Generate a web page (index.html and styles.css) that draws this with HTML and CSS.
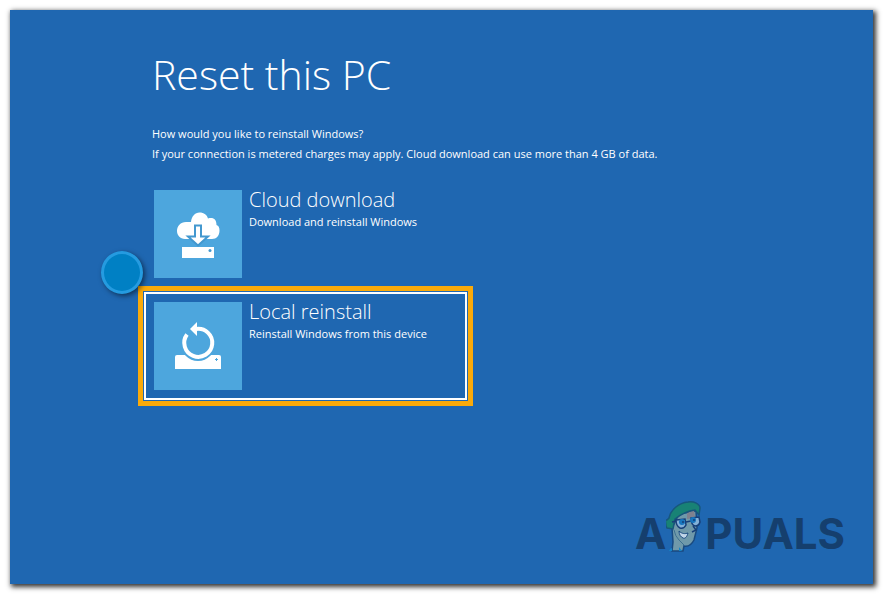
FILE: index.html
```
<!DOCTYPE html>
<html lang="en">
<head>
  <meta charset="UTF-8">
  <meta name="viewport" content="width=device-width, initial-scale=1.0">
  <title>Reset this PC</title>
  <link rel="stylesheet" href="styles.css">
</head>
<body>
  <div class="screen">
    <main class="content">
      <h1 class="title">Reset this PC</h1>
      <p class="text">How would you like to reinstall Windows?</p>
      <p class="text">If your connection is metered charges may apply. Cloud download can use more than 4 GB of data.</p>

      <div class="options">
        <button class="option" type="button">
          <span class="tile">
            <svg width="88" height="88" viewBox="0 0 88 88" aria-hidden="true">
              <path fill="#fff" d="M31 49c-5 0-8-4-8-8 0-5 3.500-9 9-9h5c.5-5.500 4-9.500 8.500-9.500 4.500 0 7.500 2.500 8.500 6 5.500-1.500 8.500 1 8.500 6.500 2 .5 3 2.500 3 5.500 0 5-3 8.500-7.500 8.500z"/>
              <path fill="#fff" stroke="#4398cf" stroke-width="2" d="M41 35.500h6v11h7L44 55.500 34 46.500h7z"/>
              <path fill="#fff" d="M28 57h32v11H28z"/>
              <circle cx="56" cy="60.500" r="1.500" fill="#4398cf"/>
            </svg>
          </span>
          <span class="label">
            <span class="name">Cloud download</span>
            <span class="detail">Download and reinstall Windows</span>
          </span>
        </button>

        <button class="option selected" type="button">
          <span class="tile">
            <svg width="88" height="88" viewBox="0 0 88 88" aria-hidden="true">
              <path fill="#fff" d="M23 53h42q2 0 2 2v12H21V55q0-2 2-2z"/>
              <circle cx="44" cy="41.500" r="17.500" fill="#4da6dd"/>
              <path fill="none" stroke="#fff" stroke-width="4" d="M42 27A14 14 0 1 1 33 32.500"/>
              <path fill="#fff" d="M36 27l7-7v14z"/>
              <path stroke="#4da6dd" d="M61 57.500h3M62.500 56v3"/>
            </svg>
          </span>
          <span class="label">
            <span class="name">Local reinstall</span>
            <span class="detail">Reinstall Windows from this device</span>
          </span>
          <span class="marker"></span>
        </button>
      </div>
    </main>

    <footer class="logo">
      <span>A</span>
      <svg class="face" width="39" height="52" viewBox="1 0 39 52" aria-hidden="true">
        <path fill="#6f99aa" stroke="#194a80" stroke-width="1.500" d="M7 28L8 42l-1 9h11l1-5c5 1 8-2 10-6l2-8 1-4-1-17-17 3z"/>
        <path fill="#7e818f" d="M22 13l7-3 1 8-8 1z"/>
        <path fill="#188275" stroke="#17577c" stroke-width="1.500" d="M2 20l2-2C6 9 14 3 23 2c6-1 12 2 12 6l-1 7-4-5c-8 1-15 5-20 9l-2 10-6-1c-2-2-1-7-2-8z"/>
        <path fill="#83b1d8" stroke="#173f78" stroke-width="1.500" d="M11 20l9-1 1 6q-2 4-6 3-4-2-4-8zM26 18l8-1 1 5q-1 4-5 4-4-1-4-8z"/>
        <path fill="none" stroke="#173f78" stroke-width="1.500" d="M7 22l4-1M21 22l5-1M28 26l3 4-4 2"/>
        <circle cx="17" cy="22" r="3" fill="#1775bd"/>
        <circle cx="28" cy="20" r="3" fill="#1775bd"/>
        <circle cx="18" cy="22" r="1" fill="#173f78"/>
        <circle cx="29" cy="20" r="1" fill="#173f78"/>
        <path fill="#c0d5e8" stroke="#194a80" d="M14 31c3 3 6 3 9 2-1 4-3 6-5 5s-4-3-4-7z"/>
        <path fill="none" stroke="#3d7090" d="M9 30q1 6 5 10l5 5"/>
        <path fill="#1683c5" d="M4 51q1-3 3-3v3zM14 51v-4l3 4z"/>
      </svg>
      <span>PUALS</span>
    </footer>
  </div>
</body>
</html>
```
FILE: styles.css
```
* {
  box-sizing: border-box;
}
body {
  margin: 0;
  padding: 10px 11px 11px 10px;
  min-height: 100vh;
  display: flex;
  background-color: #fff;
  font-family: "Open Sans", "Noto Sans", sans-serif;
  color: #fff;
}
.screen {
  flex: 1;
  display: flex;
  flex-direction: column;
  justify-content: space-between;
  background-color: #1f67b1;
  box-shadow: 2px 2px 5px 1px rgba(0, 0, 0, 0.8);
}
.content {
  padding: 32px 16px 0 142px;
}
.title {
  margin: 0 0 18px;
  font-size: 41px;
  font-weight: 300;
  line-height: 64px;
}
.text {
  margin: 0;
  font-size: 11px;
  line-height: 20px;
}
.options {
  display: flex;
  flex-direction: column;
  align-items: flex-start;
  gap: 4px;
  margin: 16px 0 0 -8px;
}
.option {
  position: relative;
  display: flex;
  gap: 7px;
  width: 323px;
  max-width: 100%;
  padding: 8px;
  border: 2px solid transparent;
  background: none;
  color: #fff;
  font-family: inherit;
  text-align: left;
  cursor: pointer;
}
.option.selected {
  border-color: #fff;
  outline: 5px solid #faaa0a;
  outline-offset: 1px;
}
.tile {
  width: 88px;
  height: 88px;
  background-color: #4da6dd;
}
.tile svg {
  display: block;
}
.name,
.detail {
  display: block;
  white-space: nowrap;
}
.name {
  font-size: 20px;
  font-weight: 300;
  line-height: 20px;
}
.detail {
  font-size: 11px;
  line-height: 24px;
}
.marker {
  position: absolute;
  left: -45px;
  top: -43px;
  width: 42px;
  height: 43px;
  border: 3px solid #259be0;
  border-radius: 50%;
  background-color: #0080c4;
  box-shadow: 2px 2px 5px rgba(0, 0, 0, 0.5);
}
.logo {
  display: flex;
  align-items: flex-end;
  align-self: flex-end;
  padding: 0 28px 32px 0;
  color: #153f6e;
  font-family: Inter, sans-serif;
  font-size: 42px;
  font-weight: 700;
  line-height: 36px;
}
```
